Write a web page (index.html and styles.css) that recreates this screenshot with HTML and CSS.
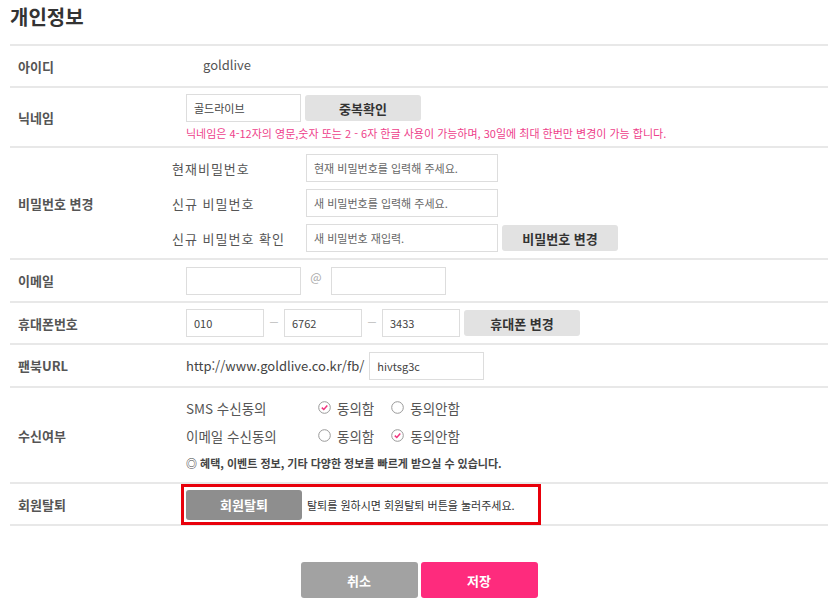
FILE: index.html
```html
<!DOCTYPE html>
<html lang="ko">
<head>
	<meta charset="UTF-8">
	<title>개인정보</title>
	<link rel="stylesheet" href="styles.css">
</head>
<body>
	<div class="wrap">
		<h2 class="title">개인정보</h2>

		<div class="form">
			<div class="row row-id">
				<div class="label">아이디</div>
				<div class="value"><span class="userid">goldlive</span></div>
			</div>

			<div class="row row-nick">
				<div class="label">닉네임</div>
				<div class="value">
					<div class="line">
						<input class="ipt ipt-m" type="text" value="골드라이브">
						<button class="btn-gray">중복확인</button>
					</div>
					<p class="warn">닉네임은 4-12자의 영문,숫자 또는 2 - 6자 한글 사용이 가능하며, 30일에 최대 한번만 변경이 가능 합니다.</p>
				</div>
			</div>

			<div class="row row-pw">
				<div class="label">비밀번호 변경</div>
				<div class="value pw">
					<div class="pw-line">
						<span class="sub">현재비밀번호</span>
						<input class="ipt ipt-l" type="password" placeholder="현재 비밀번호를 입력해 주세요.">
					</div>
					<div class="pw-line">
						<span class="sub">신규 비밀번호</span>
						<input class="ipt ipt-l" type="password" placeholder="새 비밀번호를 입력해 주세요.">
					</div>
					<div class="pw-line">
						<span class="sub">신규 비밀번호 확인</span>
						<input class="ipt ipt-l" type="password" placeholder="새 비밀번호 재입력.">
						<button class="btn-gray">비밀번호 변경</button>
					</div>
				</div>
			</div>

			<div class="row row-mail">
				<div class="label">이메일</div>
				<div class="value">
					<div class="line">
						<input class="ipt ipt-m" type="text">
						<span class="at">@</span>
						<input class="ipt ipt-m" type="text">
					</div>
				</div>
			</div>

			<div class="row row-phone">
				<div class="label">휴대폰번호</div>
				<div class="value">
					<div class="line">
						<input class="ipt ipt-s" type="text" value="010">
						<span class="dash">—</span>
						<input class="ipt ipt-s" type="text" value="6762">
						<span class="dash">—</span>
						<input class="ipt ipt-s" type="text" value="3433">
						<button class="btn-gray">휴대폰 변경</button>
					</div>
				</div>
			</div>

			<div class="row row-url">
				<div class="label">팬북URL</div>
				<div class="value">
					<div class="line">
						<span class="url">http://www.goldlive.co.kr/fb/</span>
						<input class="ipt ipt-m" type="text" value="hivtsg3c">
					</div>
				</div>
			</div>

			<div class="row row-agree">
				<div class="label">수신여부</div>
				<div class="value">
					<div class="agree-line">
						<span class="sub2">SMS 수신동의</span>
						<span class="radio on"><svg width="13" height="13" viewBox="0 0 13 13"><circle cx="6.5" cy="6.5" r="5.8" fill="none" stroke="#999" stroke-width="1"/><path d="M3.8 6.6 L5.8 8.5 L9.3 4.6" fill="none" stroke="#f0357f" stroke-width="1.5"/></svg>동의함</span>
						<span class="radio"><svg width="13" height="13" viewBox="0 0 13 13"><circle cx="6.5" cy="6.5" r="5.8" fill="none" stroke="#999" stroke-width="1"/></svg>동의안함</span>
					</div>
					<div class="agree-line">
						<span class="sub2">이메일 수신동의</span>
						<span class="radio"><svg width="13" height="13" viewBox="0 0 13 13"><circle cx="6.5" cy="6.5" r="5.8" fill="none" stroke="#999" stroke-width="1"/></svg>동의함</span>
						<span class="radio on"><svg width="13" height="13" viewBox="0 0 13 13"><circle cx="6.5" cy="6.5" r="5.8" fill="none" stroke="#999" stroke-width="1"/><path d="M3.8 6.6 L5.8 8.5 L9.3 4.6" fill="none" stroke="#f0357f" stroke-width="1.5"/></svg>동의안함</span>
					</div>
					<p class="note">◎ 혜택, 이벤트 정보, 기타 다양한 정보를 빠르게 받으실 수 있습니다.</p>
				</div>
			</div>

			<div class="row row-out">
				<div class="label">회원탈퇴</div>
				<div class="value">
					<div class="out-box">
						<button class="btn-out">회원탈퇴</button>
						<span class="out-txt">탈퇴를 원하시면 회원탈퇴 버튼을 눌러주세요.</span>
					</div>
				</div>
			</div>
		</div>

		<div class="btns">
			<button class="btn-cancel">취소</button>
			<button class="btn-save">저장</button>
		</div>
	</div>
</body>
</html>
```

FILE: styles.css
```css
body,h2,p{margin: 0;padding: 0;}
body{background: #fff; font-family: "Noto Sans CJK KR", "Noto Sans", sans-serif; color: #555;}
button{font-family: inherit; cursor: pointer;}

.wrap{padding: 0 10px;}
.title{font-size: 20px; font-weight: 700; color: #333; line-height: 24px; padding: 5px 0 15px;}

.form{border-top: 2px solid #e8e8e8;}
.row{display: grid; grid-template-columns: 176px 1fr; align-items: center; border-bottom: 2px solid #e8e8e8;}
.label{padding-left: 8px; font-size: 13px; font-weight: 700; color: #555;}
.value{display: flex; flex-direction: column;}
.line{display: flex; align-items: center;}

.ipt{height: 28px; box-sizing: border-box; border: 1px solid #ddd; background: #fff; padding: 0 7px; font-family: inherit; font-size: 11px; color: #444; outline: none;}
.ipt::placeholder{color: #666;}
.ipt-s{width: 78px;}
.ipt-m{width: 115px;}
.ipt-l{width: 192px;}

.btn-gray{height: 26px; width: 116px; margin-left: 4px; border: 0; border-radius: 3px; background: #e2e2e2; color: #333; font-size: 13px; font-weight: 700; padding: 0;}

.row-id{height: 40px;}
.userid{padding-left: 17px; font-size: 13px; color: #555; margin-top: -3px;}

.row-nick{height: 58px;}
.row-nick .value{align-self: start; padding-top: 6px;}
.warn{font-size: 11px; color: #ee3f8b; margin-top: 4px; line-height: 14px; white-space: nowrap;}

.row-pw{height: 110px;}
.pw{margin-left: -14px; gap: 7px;}
.pw-line{display: flex; align-items: center;}
.sub{width: 134px; font-size: 13px; letter-spacing: 1px; color: #555;}

.row-mail{height: 41px;}
.at{width: 30px; text-align: center; font-size: 12px; color: #aaa; margin-top: -8px;}
.row-phone{height: 40px;}
.dash{width: 20px; text-align: center; font-size: 10px; color: #bbb; margin-top: -6px;}
.row-url{height: 41px;}
.url{font-size: 13px; color: #444; margin-right: 5px;}

.row-agree{height: 94px;}
.row-agree .value{padding-bottom: 6px;}
.agree-line{display: flex; align-items: center; height: 28px;}
.sub2{width: 132px; font-size: 13.5px; color: #555;}
.radio{display: flex; align-items: center; gap: 6px; font-size: 13.5px; color: #555; margin-right: 17px;}
.radio svg{display: block;}
.note{font-size: 11px; font-weight: 700; color: #444; margin-top: 5px; white-space: nowrap;}

.row-out{height: 40px;}
.out-box{display: flex; align-items: center; width: 352px; height: 35px; margin-left: -5px; border: 3px solid #e8000b; padding-left: 2px;}
.btn-out{width: 116px; height: 30px; border: 0; border-radius: 3px; background: #8e8e8e; color: #fff; font-size: 13px; font-weight: 700; padding: 0;}
.out-txt{font-size: 11px; color: #333; margin-left: 5px; white-space: nowrap;}

.btns{display: flex; justify-content: center; gap: 3px; margin-top: 36px;}
.btns button{width: 117px; height: 36px; border: 0; border-radius: 3px; color: #fff; font-size: 13px; font-weight: 700;}
.btn-cancel{background: #a2a2a2;}
.btn-save{background: #fe2b7d;}
```
